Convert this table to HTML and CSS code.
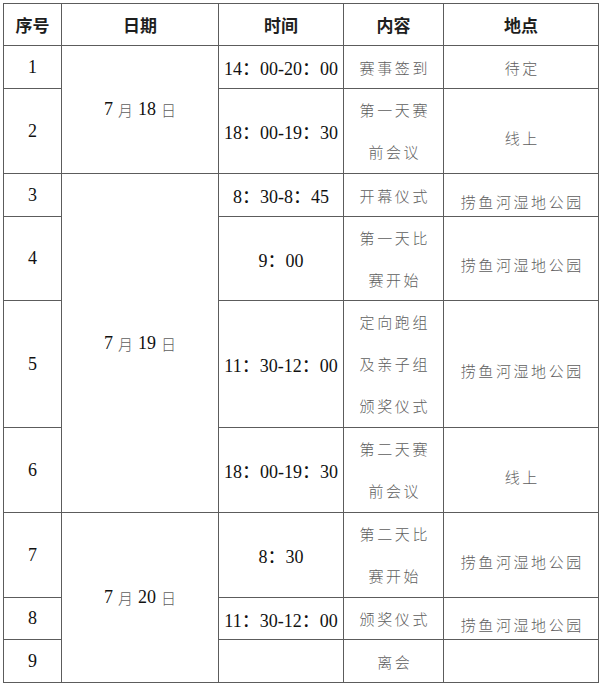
FILE: index.html
```html
<!DOCTYPE html>
<html lang="zh-CN">
<head>
<meta charset="utf-8">
<title>日程安排</title>
<link rel="stylesheet" href="styles.css">
</head>
<body>
<div class="sched">
  <div class="cell head">序号</div>
  <div class="cell head">日期</div>
  <div class="cell head">时间</div>
  <div class="cell head">内容</div>
  <div class="cell head">地点</div>

  <div class="cell num">1</div>
  <div class="cell date span2"><span class="n">7</span><span class="z">月</span><span class="n">18</span><span class="z">日</span></div>
  <div class="cell num">14：00-20：00</div>
  <div class="cell zh">赛事签到</div>
  <div class="cell zh">待定</div>

  <div class="cell num">2</div>
  <div class="cell num">18：00-19：30</div>
  <div class="cell zh multi">第一天赛<br>前会议</div>
  <div class="cell zh low">线上</div>

  <div class="cell num">3</div>
  <div class="cell date span4"><span class="n">7</span><span class="z">月</span><span class="n">19</span><span class="z">日</span></div>
  <div class="cell num">8：30-8：45</div>
  <div class="cell zh">开幕仪式</div>
  <div class="cell zh low">捞鱼河湿地公园</div>

  <div class="cell num">4</div>
  <div class="cell num">9：00</div>
  <div class="cell zh multi">第一天比<br>赛开始</div>
  <div class="cell zh low">捞鱼河湿地公园</div>

  <div class="cell num">5</div>
  <div class="cell num">11：30-12：00</div>
  <div class="cell zh multi">定向跑组<br>及亲子组<br>颁奖仪式</div>
  <div class="cell zh low">捞鱼河湿地公园</div>

  <div class="cell num">6</div>
  <div class="cell num">18：00-19：30</div>
  <div class="cell zh multi">第二天赛<br>前会议</div>
  <div class="cell zh low">线上</div>

  <div class="cell num">7</div>
  <div class="cell date span3"><span class="n">7</span><span class="z">月</span><span class="n">20</span><span class="z">日</span></div>
  <div class="cell num">8：30</div>
  <div class="cell zh multi">第二天比<br>赛开始</div>
  <div class="cell zh low">捞鱼河湿地公园</div>

  <div class="cell num">8</div>
  <div class="cell num">11：30-12：00</div>
  <div class="cell zh">颁奖仪式</div>
  <div class="cell zh low">捞鱼河湿地公园</div>

  <div class="cell num">9</div>
  <div class="cell num"></div>
  <div class="cell zh">离会</div>
  <div class="cell zh"></div>
</div>
</body>
</html>
```

FILE: styles.css
```css
html, body {
  margin: 0;
  padding: 0;
  background: #ffffff;
}

body {
  padding: 3px 0 0 3px;
}

.sched {
  display: inline-grid;
  grid-template-columns: 57px 156px 124px 99px 154px;
  grid-template-rows: 41px 42px 84px 42px 83px 126px 84px 84px 41px 42px;
  gap: 1px;
  padding: 1px;
  background: #5c5c5c;
}

.cell {
  background: #ffffff;
  display: flex;
  align-items: center;
  justify-content: center;
  text-align: center;
  white-space: nowrap;
  overflow: hidden;
}

.head {
  font-family: "Noto Sans CJK SC", "Noto Sans", sans-serif;
  font-weight: 700;
  font-size: 17px;
  color: #1e1e1e;
}

.num {
  font-family: "Liberation Serif", "Noto Sans CJK SC", serif;
  font-size: 18px;
  color: #111111;
}

.zh {
  font-family: "Noto Sans CJK SC", sans-serif;
  font-weight: 300;
  font-size: 15px;
  color: #5e5e5e;
  letter-spacing: 2.6px;
  padding-left: 2.6px;
}

.multi {
  line-height: 42px;
}

.low {
  padding-top: 12px;
}

.span2 { grid-row: span 2; }
.span3 { grid-row: span 3; }
.span4 { grid-row: span 4; }

.date {
  align-items: center;
}

.date .n {
  font-family: "Liberation Serif", serif;
  font-size: 18px;
  color: #111111;
}

.date .z {
  font-family: "Noto Sans CJK SC", sans-serif;
  font-weight: 300;
  font-size: 15px;
  color: #5e5e5e;
  margin: 0 5px;
}

.date .z:last-child {
  margin-right: 0;
}
```
